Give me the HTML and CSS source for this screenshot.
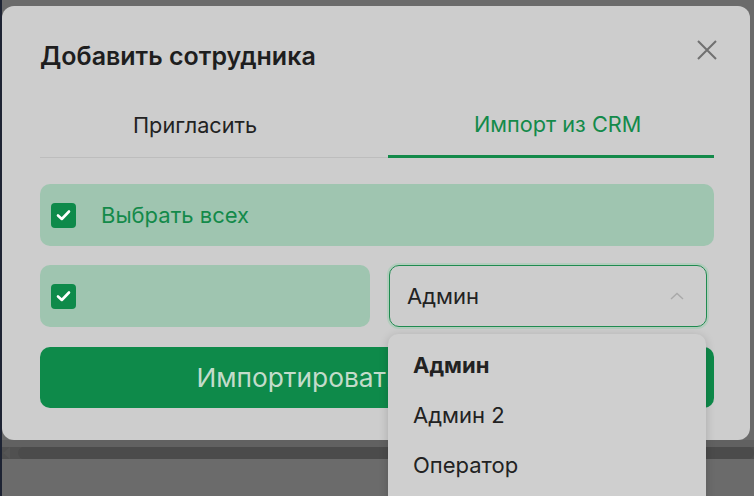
FILE: index.html
```html
<!DOCTYPE html>
<html lang="ru">
<head>
  <meta charset="UTF-8" />
  <meta name="viewport" content="width=device-width, initial-scale=1.0"/>
  <title>Добавить сотрудника</title>
  <link rel="stylesheet" href="styles.css">
</head>
<body>
  <div class="screen">
    <div class="modal">
      <div class="modal-head">
        <h2 class="title">Добавить сотрудника</h2>
        <button class="close" aria-label="Закрыть">
          <svg width="20" height="20" viewBox="0 0 20 20">
            <path d="M1 1 L19 19 M19 1 L1 19" stroke="#707070" stroke-width="2" fill="none"/>
          </svg>
        </button>
      </div>

      <div class="tabs">
        <div class="tab tab-invite">Пригласить</div>
        <div class="tab tab-crm active">Импорт из CRM</div>
      </div>

      <div class="check-row all">
        <span class="box">
          <svg width="15" height="12" viewBox="0 0 15 12">
            <path d="M2 6.5 L5.8 10 L13 2.5" stroke="#fff" stroke-width="2.6" fill="none" stroke-linecap="round" stroke-linejoin="round"/>
          </svg>
        </span>
        <span class="label">Выбрать всех</span>
      </div>

      <div class="user-row">
        <div class="check-row">
          <span class="box">
            <svg width="15" height="12" viewBox="0 0 15 12">
              <path d="M2 6.5 L5.8 10 L13 2.5" stroke="#fff" stroke-width="2.6" fill="none" stroke-linecap="round" stroke-linejoin="round"/>
            </svg>
          </span>
        </div>
        <div class="select">
          <span>Админ</span>
          <svg width="14" height="8" viewBox="0 0 14 8">
            <path d="M1 7 L7 1.5 L13 7" stroke="#a9a9a9" stroke-width="1.4" fill="none"/>
          </svg>
        </div>
      </div>

      <button class="import-btn">Импортировать сотрудника</button>
    </div>

    <div class="scrollbar">
      <span class="arrow"></span>
      <span class="track"></span>
    </div>

    <ul class="menu">
      <li class="selected">Админ</li>
      <li>Админ 2</li>
      <li>Оператор</li>
    </ul>
  </div>
</body>
</html>
```

FILE: styles.css
```css
body {
  margin: 0;
  background: #6b6b6b;
  font-family: Inter, "Noto Sans", sans-serif;
  color: #222;
}

.screen {
  position: relative;
  height: 496px;
  overflow: hidden;
  border-left: 2px solid #1d2333;
  box-sizing: border-box;
}

.modal {
  margin-top: 6px;
  width: 748px;
  height: 434px;
  box-sizing: border-box;
  background: #cdcdcd;
  border-radius: 12px;
  padding: 30px 36px 0 38px;
}

.modal-head {
  display: flex;
  justify-content: space-between;
  align-items: center;
  height: 40px;
}

.title {
  margin: 0;
  font-size: 25px;
  font-weight: 600;
  color: #1e1e1e;
}

.close {
  border: none;
  background: none;
  padding: 0;
  margin: -12px -3px 0 0;
  width: 20px;
  height: 20px;
  cursor: pointer;
}

.tabs {
  display: flex;
  margin-top: 20px;
  font-size: 21.7px;
}

.tab {
  height: 62px;
  box-sizing: border-box;
  display: flex;
  align-items: center;
  padding-bottom: 4px;
  color: #222;
}

.tab-invite {
  width: 348px;
  padding-left: 93px;
  border-bottom: 1px solid #bdbdbd;
}

.tab-crm {
  width: 326px;
  padding-left: 86px;
}

.tab.active {
  color: #138a4a;
  border-bottom: 3px solid #138a4a;
}

.check-row {
  display: flex;
  align-items: center;
  height: 62px;
  background: #9fc5b0;
  border-radius: 10px;
  padding-left: 11px;
  box-sizing: border-box;
}

.check-row.all {
  margin-top: 26px;
}

.box {
  width: 25px;
  height: 25px;
  border-radius: 4px;
  background: #0e8a4a;
  display: flex;
  align-items: center;
  justify-content: center;
}

.label {
  margin-left: 25px;
  font-size: 22px;
  color: #138a4a;
}

.user-row {
  display: grid;
  grid-template-columns: 330px 318px;
  gap: 19px;
  margin-top: 19px;
}

.select {
  display: flex;
  align-items: center;
  justify-content: space-between;
  height: 62px;
  box-sizing: border-box;
  border: 1px solid #1f8b50;
  border-radius: 10px;
  box-shadow: 0 0 0 2px #b3cdbd;
  padding: 0 22px 0 17px;
  font-size: 22px;
  color: #222;
}

.import-btn {
  display: block;
  width: 674px;
  height: 61px;
  margin-top: 20px;
  border: none;
  border-radius: 10px;
  background: #0e8a4a;
  color: #c3dccb;
  font-family: Inter, sans-serif;
  font-size: 26.3px;
}

.scrollbar {
  display: flex;
  align-items: center;
  margin-top: 7px;
  height: 12px;
  background: #505050;
  box-shadow: 0 -7px 0 #616161;
}

.arrow {
  width: 0;
  height: 0;
  border-top: 6px solid transparent;
  border-bottom: 6px solid transparent;
  border-right: 7px solid #555;
  margin-left: 1px;
}

.track {
  flex: 1;
  height: 12px;
  margin-left: 8px;
  border-radius: 6px;
  background: #4b4b4b;
}

.menu {
  position: absolute;
  top: 334px;
  left: 386px;
  width: 318px;
  height: 190px;
  margin: 0;
  padding: 6px 0 0 0;
  list-style: none;
  background: #cfcfcf;
  border-radius: 10px;
  box-shadow: 0 2px 10px rgba(0, 0, 0, 0.18);
  box-sizing: border-box;
}

.menu li {
  height: 50px;
  line-height: 50px;
  padding-left: 25px;
  font-size: 22px;
  color: #222;
}

.menu li.selected {
  font-weight: 700;
}
```
